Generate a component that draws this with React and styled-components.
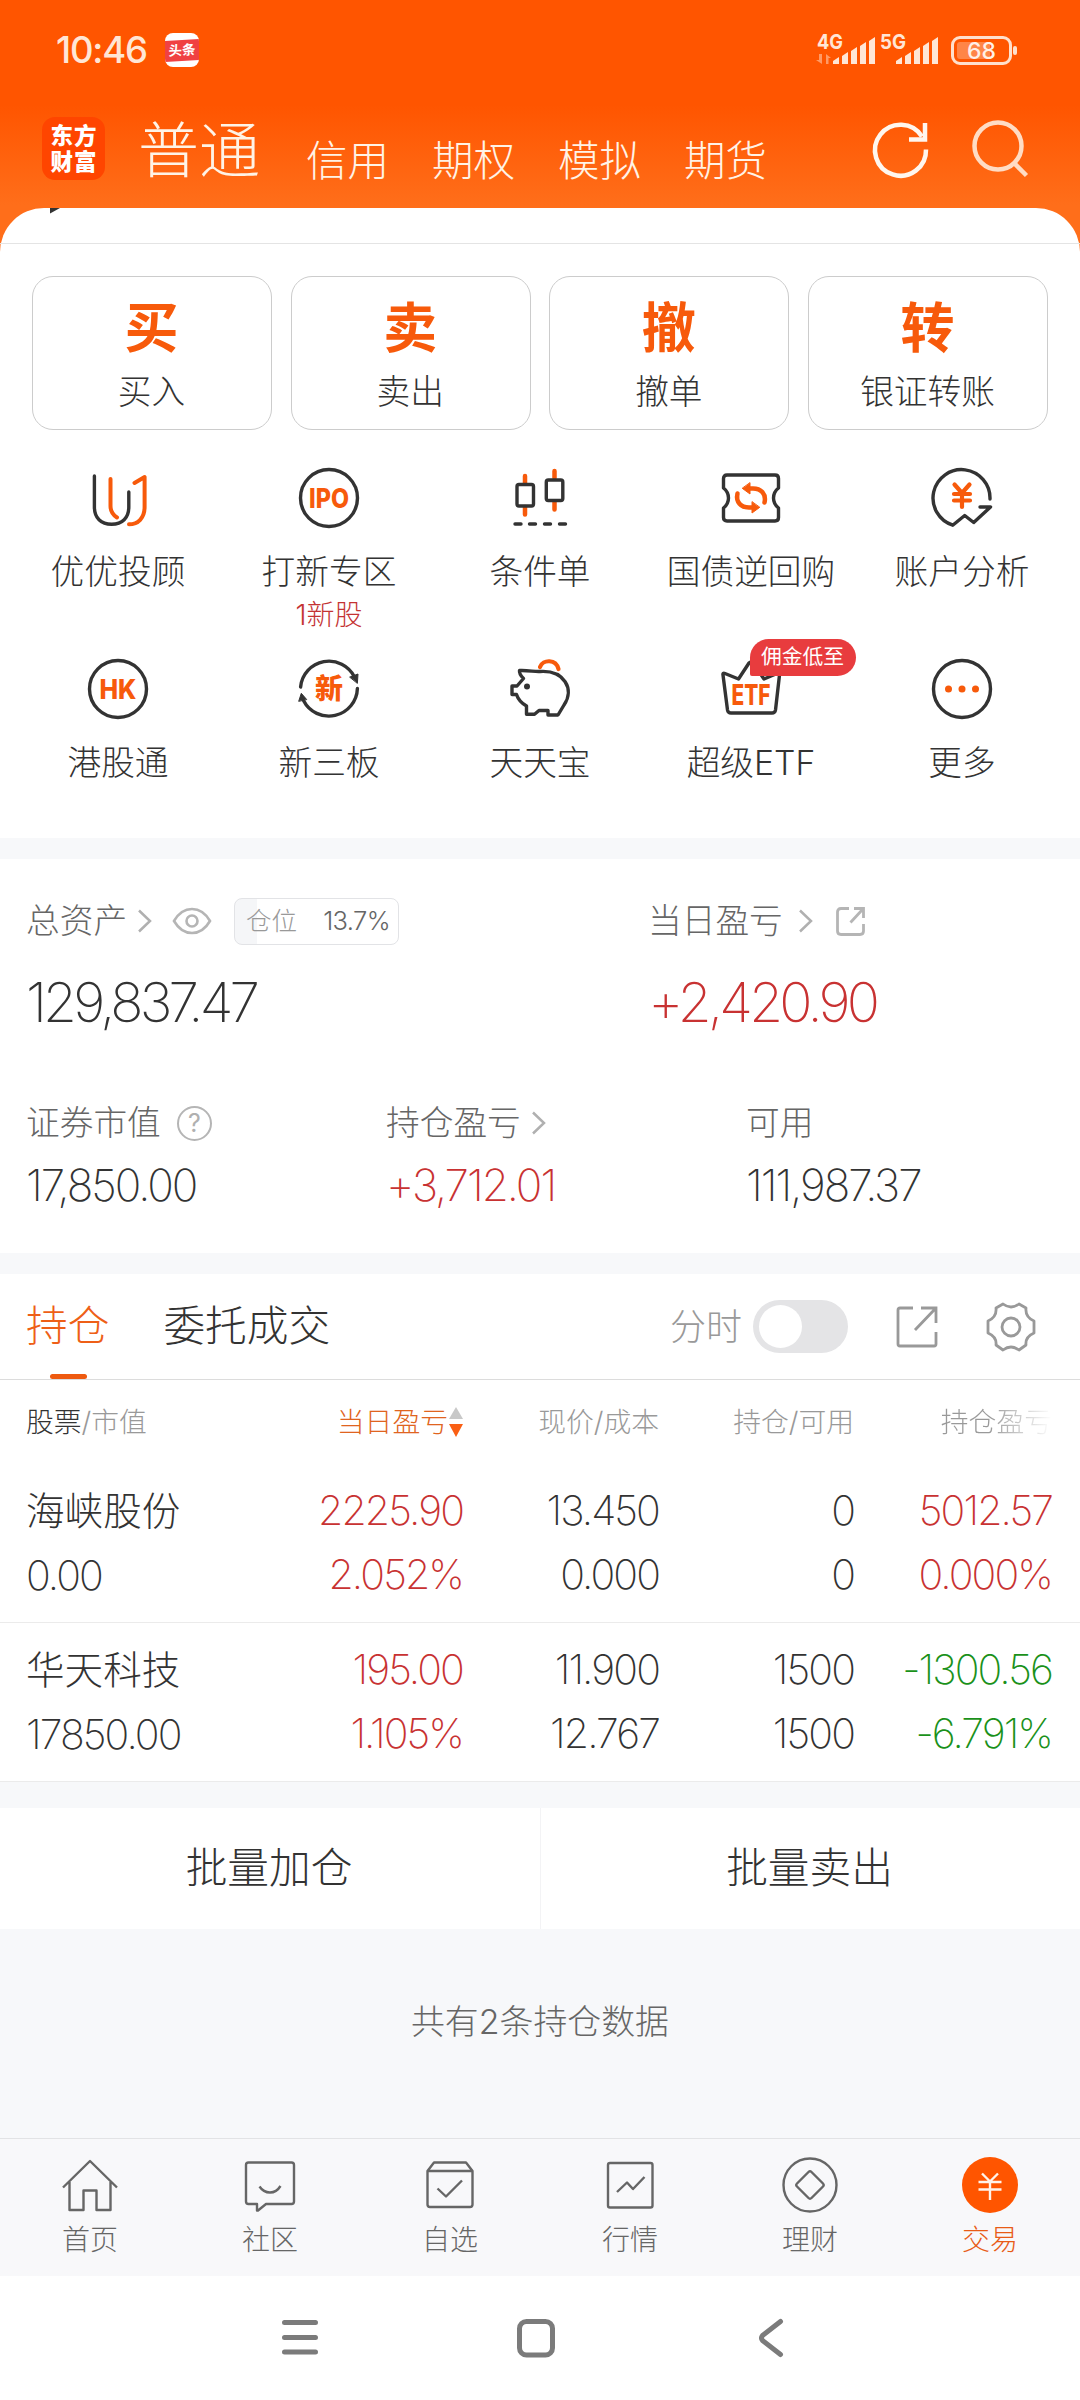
import styled, { createGlobalStyle, css } from "styled-components";

const ORANGE = "#f75a0b";
const INK = "#333333";
const RED = "#c83232";
const GREEN = "#1a911a";

const GlobalStyle = createGlobalStyle`
  * {
    box-sizing: border-box;
  }
  body {
    margin: 0;
    background: #ffffff;
    color: ${INK};
    font-family: Inter, "Noto Sans CJK SC", sans-serif;
    font-weight: 300;
    -webkit-font-smoothing: antialiased;
  }
  svg {
    display: block;
    flex: none;
    overflow: visible;
  }
`;

const actions = [
  { mark: "买", label: "买入" },
  { mark: "卖", label: "卖出" },
  { mark: "撤", label: "撤单" },
  { mark: "转", label: "银证转账" },
];

const IconText = ({ children, y = 42, width, size = 27 }) => (
  <text
    x="32"
    y={y}
    textAnchor="middle"
    textLength={width}
    lengthAdjust="spacingAndGlyphs"
    fontSize={size}
    fontWeight="800"
    fill={ORANGE}
    stroke="none"
  >
    {children}
  </text>
);

const AdvisorIcon = () => (
  <Line>
    <path d="M8.4 10V41C8.4 52 15 58.3 25.6 58.3S42.8 52 42.8 41V26" />
    <g stroke={ORANGE} strokeWidth="4">
      <path d="M24.5 13V40C24.5 45.5 27 49 31 51.5" />
      <path d="M48.5 17L58.6 11V41C58.6 52 52 58.3 43 58.3" />
    </g>
  </Line>
);

const IpoIcon = () => (
  <Line>
    <circle cx="32" cy="32" r="28.5" />
    <IconText width={40}>IPO</IconText>
  </Line>
);

const CandleIcon = () => (
  <Line>
    <path stroke={ORANGE} strokeWidth="4.5" d="M17 10V17M17 41V48.5M46.5 5V12M46.5 36V43.5" />
    <rect x="9" y="18.5" width="16.5" height="21.5" rx="2" />
    <rect x="38.3" y="14" width="16.5" height="20.5" rx="2" />
    <path d="M7 58H13M21.5 58H27.5M36.5 58H42.5M51.5 58H57.5" />
  </Line>
);

const TicketIcon = () => (
  <Line>
    <path d="M8 9H56Q59.5 9 59.5 12.5V22Q54.5 26 54.5 32T59.5 42V51.5Q59.5 55 56 55H8Q4.5 55 4.5 51.5V42Q9.5 38 9.5 32T4.5 22V12.5Q4.5 9 8 9Z" />
    <g stroke={ORANGE} strokeWidth="4.5">
      <path d="M18.5 27.5C16.5 36 22 41.5 30 41.5H34" />
      <path d="M45.5 36.5C47.5 28 42 22.5 34 22.5H30" />
      <path fill={ORANGE} strokeWidth="1" d="M33 36V47L40.5 41.5ZM31 17V28L23.5 22.5Z" />
    </g>
  </Line>
);

const AnalysisIcon = () => (
  <Line>
    <path d="M60 33A28.5 28.5 0 1 0 22.7 59.2L34.7 49.5L43.7 56.5L60.5 41H50" />
    <path
      stroke={ORANGE}
      strokeWidth="4.2"
      d="M24.5 18.5L32 27L39.5 18.5M32 27V41M24 28H40M24 34.5H40"
    />
  </Line>
);

const HkIcon = () => (
  <Line>
    <circle cx="32" cy="32" r="28.5" />
    <IconText width={37}>HK</IconText>
  </Line>
);

const BoardIcon = () => (
  <Line>
    <path d="M3.6 30A28.5 28.5 0 0 1 57.5 20" />
    <path d="M60.4 31.5A28.5 28.5 0 0 1 6.5 43.5" />
    <path fill="currentColor" strokeWidth="1" d="M53 20L61 17L60.4 26ZM1.8 44L4.3 36.3L9.5 42.3Z" />
    <IconText size={28} y={42}>新</IconText>
  </Line>
);

const PiggyIcon = () => (
  <Line>
    <path stroke={ORANGE} strokeWidth="4.2" d="M32 10C35 2 48 2 50.5 12" />
    <path d="M32 14.5C27 15 20 13 11.5 13.5C11 17 13 19 15.5 21.5L9 29H4V37.5H8.5C10 42 14 46.5 18.5 49V57.3H26.5L31 53.5H40V58H50L56 48C67 32 56 13 32 14.5Z" />
    <circle cx="19" cy="29.5" r="3" fill="currentColor" stroke="none" />
  </Line>
);

const EtfIcon = () => (
  <Line>
    <path d="M4 18Q3.5 15.5 6 16.5L19.5 22L30 6Q32 4 34 6L45 22L58 16.5Q61 15.5 60.5 18L56.5 53Q56 56 53 56H12Q9 56 8.5 53Z" />
    <IconText width={39} y={48} size={28}>ETF</IconText>
  </Line>
);

const MoreIcon = () => (
  <Line>
    <circle cx="32" cy="32" r="28.5" />
    <g fill={ORANGE} stroke="none">
      <circle cx="18.5" cy="32" r="3.5" />
      <circle cx="32" cy="32" r="3.5" />
      <circle cx="45.5" cy="32" r="3.5" />
    </g>
  </Line>
);

const features = [
  { label: "优优投顾", Icon: AdvisorIcon },
  { label: "打新专区", Icon: IpoIcon, note: "1新股" },
  { label: "条件单", Icon: CandleIcon },
  { label: "国债逆回购", Icon: TicketIcon },
  { label: "账户分析", Icon: AnalysisIcon },
  { label: "港股通", Icon: HkIcon },
  { label: "新三板", Icon: BoardIcon },
  { label: "天天宝", Icon: PiggyIcon },
  { label: "超级ETF", Icon: EtfIcon, tag: "佣金低至" },
  { label: "更多", Icon: MoreIcon },
];

const holdings = [
  {
    name: "海峡股份",
    value: "0.00",
    cells: [
      ["2225.90", "2.052%", RED],
      ["13.450", "0.000", INK],
      ["0", "0", INK],
      ["5012.57", "0.000%", RED],
    ],
  },
  {
    name: "华天科技",
    value: "17850.00",
    cells: [
      ["195.00", "1.105%", RED],
      ["11.900", "12.767", INK],
      ["1500", "1500", INK],
      ["-1300.56", "-6.791%", GREEN],
    ],
  },
];

const tabs = [
  {
    label: "首页",
    icon: (
      <path d="M5 34.5L32 8L59 34.5M11.5 29V57H25.5V37.5H38.5V57H52.5V29" />
    ),
  },
  {
    label: "社区",
    icon: (
      <>
        <path d="M10.5 9.5H53.5Q56 9.5 56 12V48.5Q56 51 53.5 51H28L20 57.5H19V51H10.5Q8 51 8 48.5V12Q8 9.5 10.5 9.5Z" />
        <path d="M21.5 33.5Q25.5 39.5 32 39.5T42.5 33" />
      </>
    ),
  },
  {
    label: "自选",
    icon: (
      <>
        <path d="M9.5 18L16 9.5H48L54.5 18V51.5Q54.5 54 52 54H12Q9.5 54 9.5 51.5ZM9.5 18H54.5" />
        <path d="M19.5 35.5L28 43.5L44 27.5" />
      </>
    ),
  },
  {
    label: "行情",
    icon: (
      <>
        <rect x="10" y="10" width="44.5" height="44.5" rx="2" />
        <path d="M19 39L29 29.5L35 36L46.5 24" />
      </>
    ),
  },
  {
    label: "理财",
    icon: (
      <>
        <circle cx="32" cy="32" r="26.5" />
        <path d="M30.5 19Q32 17.5 33.5 19L45 30.5Q46.5 32 45 33.5L33.5 45Q32 46.5 30.5 45L19 33.5Q17.5 32 19 30.5Z" />
      </>
    ),
  },
  {
    label: "交易",
    active: true,
    icon: (
      <>
        <circle cx="32" cy="32" r="28" fill="#ff5500" stroke="none" />
        <path stroke="#fff3ea" d="M24 20.5L32 28.5L40 20.5M32 28.5V47M20.5 29H43.5M20.5 36.5H43.5" />
      </>
    ),
  },
];

const Signal = ({ name, data }) => (
  <svg width="59" height="36" fill="#ffe6d6">
    <text x="0" y="16.5" fontSize="20.5" fontWeight="700" textLength="26" lengthAdjust="spacingAndGlyphs">
      {name}
    </text>
    {data && (
      <path fill="#ff9a66" d="M2 22H5V32L-1 28H2ZM9 32V22L14 26H11.5V32Z" />
    )}
    <path d="M16 32V29L22 25V32ZM25 32V24L31 20V32ZM34 32V19L40 15V32ZM43 32V14L49 10V32ZM52 32V9L58 5V32Z" />
  </svg>
);

const Chevron = () => (
  <svg width="16" height="24" fill="none" stroke="#b0b0b0" strokeWidth="2.5">
    <path d="M2 1.5L13 12L2 22.5" />
  </svg>
);

const ShareIcon = ({ size, color, width = 2.8 }) => (
  <svg width={size} height={size} viewBox="0 0 42 42" fill="none" stroke={color} strokeWidth={width}>
    <path d="M17 2H4Q2 2 2 4V38Q2 40 4 40H38Q40 40 40 38V26M25 2H40V17M39 3L19 24" />
  </svg>
);

// same mark as ShareIcon, drawn heavier with softer corners
const ShareSmallIcon = () => (
  <svg width="29" height="29" fill="none" stroke="#b5b5b5" strokeWidth="2.8">
    <path d="M13 1.5H5Q1.5 1.5 1.5 5V24Q1.5 27.500 5 27.500H24Q27.500 27.500 27.500 24V17M18 1.500H27.500V11M26.500 2.500L14.500 15.500" />
  </svg>
);

const App = () => {
  return (
    <Phone>
      <GlobalStyle />
      <Hero>
        <StatusBar>
          <Clock>10:46</Clock>
          <NewsBadge>
            <span>头条</span>
          </NewsBadge>
          <StatusRight>
            <Signal name="4G" data />
            <Signal name="5G" />
            <Battery>
              <span>68</span>
            </Battery>
          </StatusRight>
        </StatusBar>
        <TopNav>
          <Logo>
            东方
            <br />
            财富
          </Logo>
          <Market $main>普通</Market>
          <Market>信用</Market>
          <Market>期权</Market>
          <Market>模拟</Market>
          <Market>期货</Market>
          <TopIcons>
            <svg width="56" height="58" fill="none" stroke="#fff6ee" strokeWidth="4.5">
              <path d="M53 29.5A25.5 25.5 0 1 1 49 16.5" />
              <path d="M52 3V19.5H36" />
            </svg>
            <svg width="58" height="58" fill="none" stroke="#ffdcc4" strokeWidth="4.5">
              <circle cx="26" cy="26" r="23.5" />
              <path d="M42 43L54.5 55.5" />
            </svg>
          </TopIcons>
        </TopNav>
      </Hero>

      <Sheet>
        <SheetTop>
          <svg width="12" height="6">
            <path d="M0 0H10L0 5.5Z" fill="#333333" />
          </svg>
        </SheetTop>
        <Actions>
          {actions.map((a) => (
            <Action key={a.label}>
              <strong>{a.mark}</strong>
              <span>{a.label}</span>
            </Action>
          ))}
        </Actions>
        <Features>
          {features.map(({ label, Icon, note, tag }) => (
            <Feature key={label}>
              <Icon />
              {tag && <Tag>{tag}</Tag>}
              <span>{label}</span>
              {note && <small>{note}</small>}
            </Feature>
          ))}
        </Features>
      </Sheet>

      <Assets>
        <AssetRow $columns="622px 1fr">
          <div>
            <Label>
              总资产
              <Chevron />
              <EyeIcon viewBox="0 0 40 28">
                <path d="M2 14Q9 2 20 2T38 14Q31 26 20 26T2 14Z" />
                <circle cx="20" cy="14" r="5.5" />
              </EyeIcon>
              <Ratio>
                <span>仓位</span>
                <em>13.7%</em>
              </Ratio>
            </Label>
            <Amount $large>129,837.47</Amount>
          </div>
          <div>
            <Label $gap={22}>
              <span>当日盈亏</span>
              <Chevron />
              <ShareSmallIcon />
            </Label>
            <Amount $large $color={RED}>
              +2,420.90
            </Amount>
          </div>
        </AssetRow>
        <AssetRow $columns="360px 360px 1fr">
          <div>
            <Label $gap={16}>
              证券市值
              <Help>?</Help>
            </Label>
            <Amount>17,850.00</Amount>
          </div>
          <div>
            <Label>
              持仓盈亏
              <Chevron />
            </Label>
            <Amount $color={RED}>+3,712.01</Amount>
          </div>
          <div>
            <Label>可用</Label>
            <Amount>111,987.37</Amount>
          </div>
        </AssetRow>
      </Assets>

      <HoldingTabs>
        <HoldingTab $active>持仓</HoldingTab>
        <HoldingTab>委托成交</HoldingTab>
        <Tools>
          <span>分时</span>
          <Toggle />
          <ShareIcon size={42} color="#999999" />
          <svg width="50" height="50" fill="none" stroke="#999999" strokeWidth="2.8" strokeLinejoin="round">
            <path d="M17 2Q25 8 33 2L40 6Q39 15 48 19V31Q39 35 40 43L33 48Q25 42 17 48L10 43Q11 35 2 31V19Q11 15 10 6Z" />
            <circle cx="25" cy="25" r="9" />
          </svg>
        </Tools>
      </HoldingTabs>

      <TableHead>
        <div>
          股票<i>/市值</i>
        </div>
        <SortHead>
          当日盈亏
          <svg width="16" height="30">
            <path d="M8 0L15 12H1Z" fill="#c8c8c8" />
            <path d="M8 30L15 17H1Z" fill="#fa5f14" />
          </svg>
        </SortHead>
        <i>现价/成本</i>
        <i>持仓/可用</i>
        <FadeHead>持仓盈亏</FadeHead>
      </TableHead>
      {holdings.map((h) => (
        <HoldingRow key={h.name}>
          <div>
            <b>{h.name}</b>
            <br />
            {h.value}
          </div>
          {h.cells.map(([top, bottom, color], i) => (
            <Cell key={i} $color={color}>
              {top}
              <br />
              {bottom}
            </Cell>
          ))}
        </HoldingRow>
      ))}

      <Batch>
        <button>批量加仓</button>
        <button>批量卖出</button>
      </Batch>
      <Summary>共有2条持仓数据</Summary>

      <TabBar>
        {tabs.map((t) => (
          <TabItem key={t.label} $active={t.active}>
            <svg width="64" height="64" fill="none" stroke="currentColor" strokeWidth="2.4" strokeLinejoin="round">
              {t.icon}
            </svg>
            {t.label}
          </TabItem>
        ))}
      </TabBar>
      <SystemNav>
        <svg width="36" height="38">
          <path d="M2.5 3.5H33.5M2.5 18.5H33.5M2.5 33H33.5" />
        </svg>
        <svg width="38" height="38">
          <rect x="2.5" y="2.5" width="33" height="33.5" rx="7" />
        </svg>
        <svg width="26" height="38">
          <path d="M21.5 2.5L3.5 16.5Q1.5 19 3.5 21.5L21.5 35.5" />
        </svg>
      </SystemNav>
    </Phone>
  );
};

//styled components
const Phone = styled.div`
  width: 1080px;
  height: 2400px;
  overflow: hidden;
  display: flex;
  flex-direction: column;
  background: #f7f8fa;
`;

const Line = styled.svg.attrs({ width: 64, height: 64, viewBox: "0 0 64 64" })`
  fill: none;
  stroke: #333333;
  color: #333333;
  stroke-width: 3.4;
  stroke-linecap: round;
  stroke-linejoin: round;
`;

// runs on behind the rounded corners of the sheet
const Hero = styled.header`
  height: 258px;
  margin-bottom: -50px;
  flex: none;
  background: linear-gradient(#ff5500 105px, #ff6e1a 205px);
`;
const StatusBar = styled.div`
  height: 100px;
  padding: 0 68px 0 56px;
  display: flex;
  align-items: center;
`;
const Clock = styled.div`
  width: 109px;
  font-size: 36.5px;
  font-weight: 500;
  letter-spacing: -1.2px;
  color: #ffe6d6;
`;
const NewsBadge = styled.div`
  width: 34px;
  height: 34px;
  border-radius: 8px;
  overflow: hidden;
  background: #ffffff;
  display: flex;
  align-items: center;
  span {
    width: 34px;
    height: 21px;
    line-height: 20px;
    text-align: center;
    background: #f04142;
    color: #ffffff;
    font-size: 13.5px;
    font-weight: 700;
    transform: skewY(-3deg);
  }
`;
const StatusRight = styled.div`
  margin-left: auto;
  display: flex;
  align-items: center;
  gap: 4px;
`;
const Battery = styled.div`
  position: relative;
  width: 61px;
  height: 29px;
  margin-left: 8px;
  padding: 3px;
  border: 3px solid #ffe0cc;
  border-radius: 9px;
  span {
    display: block;
    height: 17px;
    line-height: 18px;
    text-align: center;
    color: #fff0e6;
    font-size: 23px;
    font-weight: 500;
    border-radius: 3px;
    background: linear-gradient(90deg, #ff8547 68%, transparent 68%);
  }
  &::after {
    content: "";
    position: absolute;
    right: -8px;
    top: 7px;
    width: 4px;
    height: 9px;
    border-radius: 2px;
    background: #ffe0cc;
  }
`;
const TopNav = styled.nav`
  height: 108px;
  padding: 0 50px 0 42px;
  display: flex;
  align-items: flex-start;
`;
const Logo = styled.div`
  width: 63px;
  height: 63px;
  margin: 17px 33px 0 0;
  padding: 7px 0 0 1px;
  border-radius: 13px;
  background: #ff4500;
  color: #ffffff;
  font-family: "Liberation Sans", "Noto Sans CJK SC", sans-serif;
  font-size: 22.5px;
  font-weight: 900;
  line-height: 26px;
  letter-spacing: 1px;
  text-align: center;
`;
const Market = styled.div`
  margin: 39px 43px 0 0;
  font-size: 41.5px;
  line-height: 44px;
  color: #fff3e6;
  ${({ $main }) =>
    $main &&
    css`
      margin: 18px 46px 0 0;
      font-size: 61px;
      line-height: 66px;
    `}
`;
const TopIcons = styled.div`
  margin: 20px 0 0 auto;
  display: flex;
  gap: 43px;
`;

const Sheet = styled.main`
  height: 630px;
  flex: none;
  border-radius: 44px 44px 0 0;
  background: #ffffff;
`;
const SheetTop = styled.div`
  height: 36px;
  padding-left: 50px;
  border-bottom: 1px solid #e4e4e4;
`;
const Actions = styled.div`
  padding: 32px 32px 0;
  display: grid;
  grid-template-columns: repeat(4, 1fr);
  gap: 18.7px;
`;
const Action = styled.div`
  height: 154px;
  padding: 22px 1px 0 0;
  border: 1px solid #cccccc;
  border-radius: 21px;
  display: flex;
  flex-direction: column;
  align-items: center;
  strong {
    color: ${ORANGE};
    font-size: 54px;
    font-weight: 700;
    line-height: 60px;
  }
  span {
    margin-top: 10px;
    font-size: 33.7px;
    line-height: 46px;
  }
`;
const Features = styled.div`
  padding: 36px 12.5px 0;
  display: grid;
  grid-template-columns: repeat(5, 1fr);
  grid-auto-rows: 191px;
`;
const Feature = styled.div`
  position: relative;
  display: flex;
  flex-direction: column;
  align-items: center;
  span {
    margin-top: 19px;
    font-size: 33.7px;
    line-height: 46px;
    white-space: nowrap;
  }
  small {
    font-size: 28px;
    line-height: 40px;
    color: #c43333;
  }
`;
const Tag = styled.div`
  position: absolute;
  left: 104px;
  top: -18px;
  width: 106px;
  height: 37px;
  line-height: 36px;
  text-align: center;
  border-radius: 19px 19px 19px 2px;
  background: #e83c3e;
  color: #ffffff;
  font-size: 20.8px;
  font-weight: 400;
`;

const Assets = styled.section`
  height: 394px;
  margin: 21px 0;
  padding: 34px 27px 0 26px;
  flex: none;
  background: #ffffff;
`;
const AssetRow = styled.div`
  display: grid;
  grid-template-columns: ${({ $columns }) => $columns};
  height: 202px;
`;
const Label = styled.div`
  display: flex;
  align-items: center;
  gap: ${({ $gap }) => $gap || 10}px;
  height: 56px;
  font-size: 33.7px;
  line-height: 50px;
  color: #666666;
  span {
    margin-right: -7px;
  }
`;
const EyeIcon = styled.svg`
  width: 40px;
  height: 28px;
  margin-left: 9px;
  fill: none;
  stroke: #b5b5b5;
  stroke-width: 2.6;
`;
const Ratio = styled.div`
  width: 165px;
  height: 47px;
  margin-left: 12px;
  padding: 0 8px 0 11px;
  display: flex;
  align-items: center;
  justify-content: space-between;
  border: 1px solid #e2e3e6;
  border-radius: 8px;
  background: linear-gradient(90deg, #f5f6f8 13.7%, #ffffff 13.7%);
  font-size: 25.5px;
  color: #999999;
  em {
    font-style: normal;
    color: #666666;
    letter-spacing: -0.6px;
  }
`;
const Amount = styled.div`
  color: ${({ $color }) => $color || INK};
  font-size: 44px;
  font-weight: 250;
  line-height: 68px;
  letter-spacing: -2px;
  ${({ $large }) =>
    $large &&
    css`
      margin-top: 21px;
      font-size: 55px;
      line-height: 64px;
      letter-spacing: -3.8px;
    `}
`;
const Help = styled.div`
  width: 35px;
  height: 35px;
  line-height: 30px;
  text-align: center;
  border: 2.5px solid #b5b5b5;
  border-radius: 50%;
  font-size: 25px;
  font-weight: 400;
  color: #b0b0b0;
`;

const HoldingTabs = styled.div`
  height: 106px;
  padding: 0 44px 0 26px;
  flex: none;
  display: flex;
  align-items: center;
  background: #ffffff;
  border-bottom: 1px solid #dcdcdc;
`;
const HoldingTab = styled.div`
  position: relative;
  height: 105px;
  line-height: 104px;
  margin-right: 54px;
  font-size: 41.7px;
  color: ${({ $active }) => ($active ? "#ee5f17" : INK)};
  ${({ $active }) =>
    $active &&
    css`
      &::after {
        content: "";
        position: absolute;
        left: 24px;
        bottom: 0;
        width: 37px;
        height: 5px;
        border-radius: 3px;
        background: #ee5a10;
      }
    `}
`;
const Tools = styled.div`
  margin-left: auto;
  display: flex;
  align-items: center;
  font-size: 36px;
  color: #999999;
  span {
    padding-bottom: 5px;
  }
  svg {
    margin-left: 48px;
  }
`;
const Toggle = styled.div`
  width: 95px;
  height: 53px;
  margin-left: 11px;
  padding: 5px 6px;
  border-radius: 27px;
  background: #e4e4e6;
  &::before {
    content: "";
    display: block;
    width: 43px;
    height: 43px;
    border-radius: 50%;
    background: #ffffff;
  }
`;

const row = css`
  flex: none;
  padding: 0 28px 0 26px;
  display: grid;
  grid-template-columns: 241px 196px 196px 195px 198px;
  background: #ffffff;
`;
const TableHead = styled.div`
  ${row}
  height: 84px;
  line-height: 84px;
  font-size: 27.8px;
  i {
    font-style: normal;
    color: #999999;
    text-align: right;
  }
`;
const SortHead = styled.div`
  margin-right: -1px;
  display: flex;
  align-items: center;
  justify-content: flex-end;
  color: #e06420;
`;
const FadeHead = styled.div`
  text-align: right;
  color: transparent;
  background: linear-gradient(90deg, #999999 135px, #ffffff 198px);
  background-clip: text;
`;
const HoldingRow = styled.div`
  ${row}
  height: 159px;
  padding-top: 15px;
  border-bottom: 1px solid #ebebeb;
  font-size: 41px;
  font-weight: 250;
  line-height: 63.5px;
  letter-spacing: -1.9px;
  b {
    font-size: 38.6px;
    font-weight: 300;
    letter-spacing: 0;
  }
`;
const Cell = styled.div`
  text-align: right;
  white-space: nowrap;
  color: ${({ $color }) => $color};
`;

const Batch = styled.div`
  height: 121px;
  margin-top: 26px;
  flex: none;
  display: grid;
  grid-template-columns: 1fr 1fr;
  background: #ffffff;
  button {
    border: 0;
    padding: 0 2px 2px 0;
    background: none;
    color: ${INK};
    font: inherit;
    font-size: 41.7px;
    line-height: 60px;
  }
  button + button {
    border-left: 1px solid #f3f3f5;
  }
`;
const Summary = styled.div`
  flex: 1;
  padding-top: 69px;
  text-align: center;
  font-size: 33.9px;
  line-height: 48px;
  color: #666666;
`;

const TabBar = styled.nav`
  height: 138px;
  flex: none;
  display: grid;
  grid-template-columns: repeat(6, 1fr);
  border-top: 1px solid #e2e3e5;
  background: #f8f8fa;
`;
const TabItem = styled.div`
  padding-top: 14px;
  display: flex;
  flex-direction: column;
  align-items: center;
  font-size: 28px;
  line-height: 46px;
  color: ${({ $active }) => ($active ? "#e85c17" : "#666666")};
`;
const SystemNav = styled.div`
  height: 124px;
  flex: none;
  padding-left: 282px;
  display: flex;
  align-items: center;
  gap: 199px;
  background: #ffffff;
  svg {
    fill: none;
    stroke: #7b7b7b;
    stroke-width: 5;
    stroke-linecap: round;
    stroke-linejoin: round;
  }
  svg:last-child {
    margin-left: 5px;
  }
`;

export default App;
